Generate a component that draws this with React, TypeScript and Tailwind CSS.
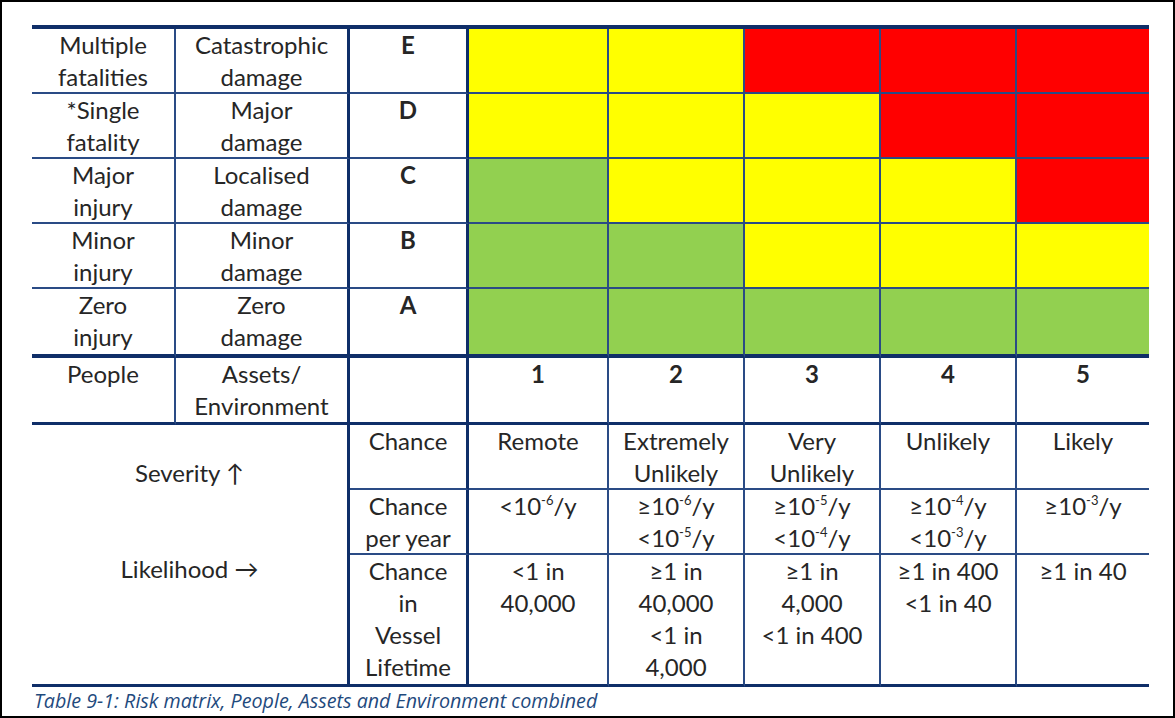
type Fill = "Y" | "R" | "G";

const fills: Record<Fill, string> = {
  Y: "bg-[#ffff00]",
  R: "bg-[#ff0000]",
  G: "bg-[#92d050]",
};

// line styles
const thinR = "border-r-2 border-r-[#2a4b85]";
const thickR = "border-r-[3px] border-r-[#0f2e68]";
const thinB = "border-b-2 border-b-[#2a4b85]";
const thickB = "border-b-[3px] border-b-[#0f2e68]";
const heavyB = "border-b-4 border-b-[#0f2e68]";

const severity: {
  people: string[];
  assets: string[];
  letter: string;
  cells: Fill[];
}[] = [
  { people: ["Multiple", "fatalities"], assets: ["Catastrophic", "damage"], letter: "E", cells: ["Y", "Y", "R", "R", "R"] },
  { people: ["*Single", "fatality"], assets: ["Major", "damage"], letter: "D", cells: ["Y", "Y", "Y", "R", "R"] },
  { people: ["Major", "injury"], assets: ["Localised", "damage"], letter: "C", cells: ["G", "Y", "Y", "Y", "R"] },
  { people: ["Minor", "injury"], assets: ["Minor", "damage"], letter: "B", cells: ["G", "G", "Y", "Y", "Y"] },
  { people: ["Zero", "injury"], assets: ["Zero", "damage"], letter: "A", cells: ["G", "G", "G", "G", "G"] },
];

const chance = ["Remote", "Extremely\nUnlikely", "Very\nUnlikely", "Unlikely", "Likely"];

function Pow({ pre, exp }: { pre: string; exp: string }) {
  return (
    <span>
      {pre}10<sup className="text-[13px] top-[-0.75em]">{exp}</sup>/y
    </span>
  );
}

const perYear = [
  [<Pow pre="<" exp="-6" />],
  [<Pow pre="≥" exp="-6" />, <Pow pre="<" exp="-5" />],
  [<Pow pre="≥" exp="-5" />, <Pow pre="<" exp="-4" />],
  [<Pow pre="≥" exp="-4" />, <Pow pre="<" exp="-3" />],
  [<Pow pre="≥" exp="-3" />],
];

const lifetime = [
  ["<1 in", "40,000"],
  ["≥1 in", "40,000", "<1 in", "4,000"],
  ["≥1 in", "4,000", "<1 in 400"],
  ["≥1 in 400", "<1 in 40"],
  ["≥1 in 40"],
];

function Lines({ lines }: { lines: React.ReactNode[] }) {
  return (
    <>
      {lines.map((l, i) => (
        <div key={i} className="whitespace-nowrap">
          {l}
        </div>
      ))}
    </>
  );
}

export default function App() {
  return (
    <div className="w-[1175px] h-[718px] bg-black p-[2px]">
      <div
        className="w-full h-full bg-white pt-[23px] pl-[30px] text-[#262626]"
        style={{ fontFamily: "Lato, 'Liberation Sans', sans-serif" }}
      >
        <div className="w-[1117px] border-t-4 border-t-[#0f2e68] grid grid-cols-[144px_174px_119px_140px_136px_136px_136px_132px] grid-rows-[65px_65px_65px_65px_69px_67px_65px_65px_132px] text-[24px] leading-[32px] text-center">
          {severity.map((row, r) => {
            const b = r === severity.length - 1 ? heavyB : thinB;
            return [
              <div key={`p${r}`} className={`${thinR} ${b}`}>
                <Lines lines={row.people} />
              </div>,
              <div key={`a${r}`} className={`${thickR} ${b}`}>
                <Lines lines={row.assets} />
              </div>,
              <div key={`l${r}`} className={`${thickR} ${b} font-bold`}>
                {row.letter}
              </div>,
              ...row.cells.map((c, i) => (
                <div
                  key={`c${r}${i}`}
                  className={`${fills[c]} ${b} ${i < 4 ? thinR : ""}`}
                />
              )),
            ];
          })}

          {/* axis labels */}
          <div className={`${thinR} ${thickB}`}>People</div>
          <div className={`${thickR} ${thickB}`}>
            <Lines lines={["Assets/", "Environment"]} />
          </div>
          <div className={`${thickR} ${thickB}`} />
          {[1, 2, 3, 4, 5].map((n) => (
            <div key={n} className={`${thickB} ${n < 5 ? thinR : ""} font-bold`}>
              {n}
            </div>
          ))}

          {/* likelihood */}
          <div className={`col-span-2 row-span-3 ${thickR} ${thickB}`}>
            <div className="h-[32px]" />
            <div>Severity ↑</div>
            <div className="h-[64px]" />
            <div>Likelihood →</div>
          </div>
          <div className={`${thickR} ${thinB}`}>Chance</div>
          {chance.map((c, i) => (
            <div key={c} className={`${thinB} ${i < 4 ? thinR : ""}`}>
              <Lines lines={c.split("\n")} />
            </div>
          ))}

          <div className={`${thickR} ${thinB}`}>
            <Lines lines={["Chance", "per year"]} />
          </div>
          {perYear.map((lines, i) => (
            <div key={i} className={`${thinB} ${i < 4 ? thinR : ""}`}>
              <Lines lines={lines} />
            </div>
          ))}

          <div className={`${thickR} ${thickB}`}>
            <Lines lines={["Chance", "in", "Vessel", "Lifetime"]} />
          </div>
          {lifetime.map((lines, i) => (
            <div key={i} className={`${thickB} ${i < 4 ? thinR : ""}`}>
              <Lines lines={lines} />
            </div>
          ))}
        </div>

        <p
          className="pl-[2px] pt-[3px] text-[19.7px] leading-[22px] italic text-[#1f4a7d] whitespace-nowrap"
          style={{ fontFamily: "'Open Sans', Lato, sans-serif" }}
        >
          Table 9-1: Risk matrix, People, Assets and Environment combined
        </p>
      </div>
    </div>
  );
}
